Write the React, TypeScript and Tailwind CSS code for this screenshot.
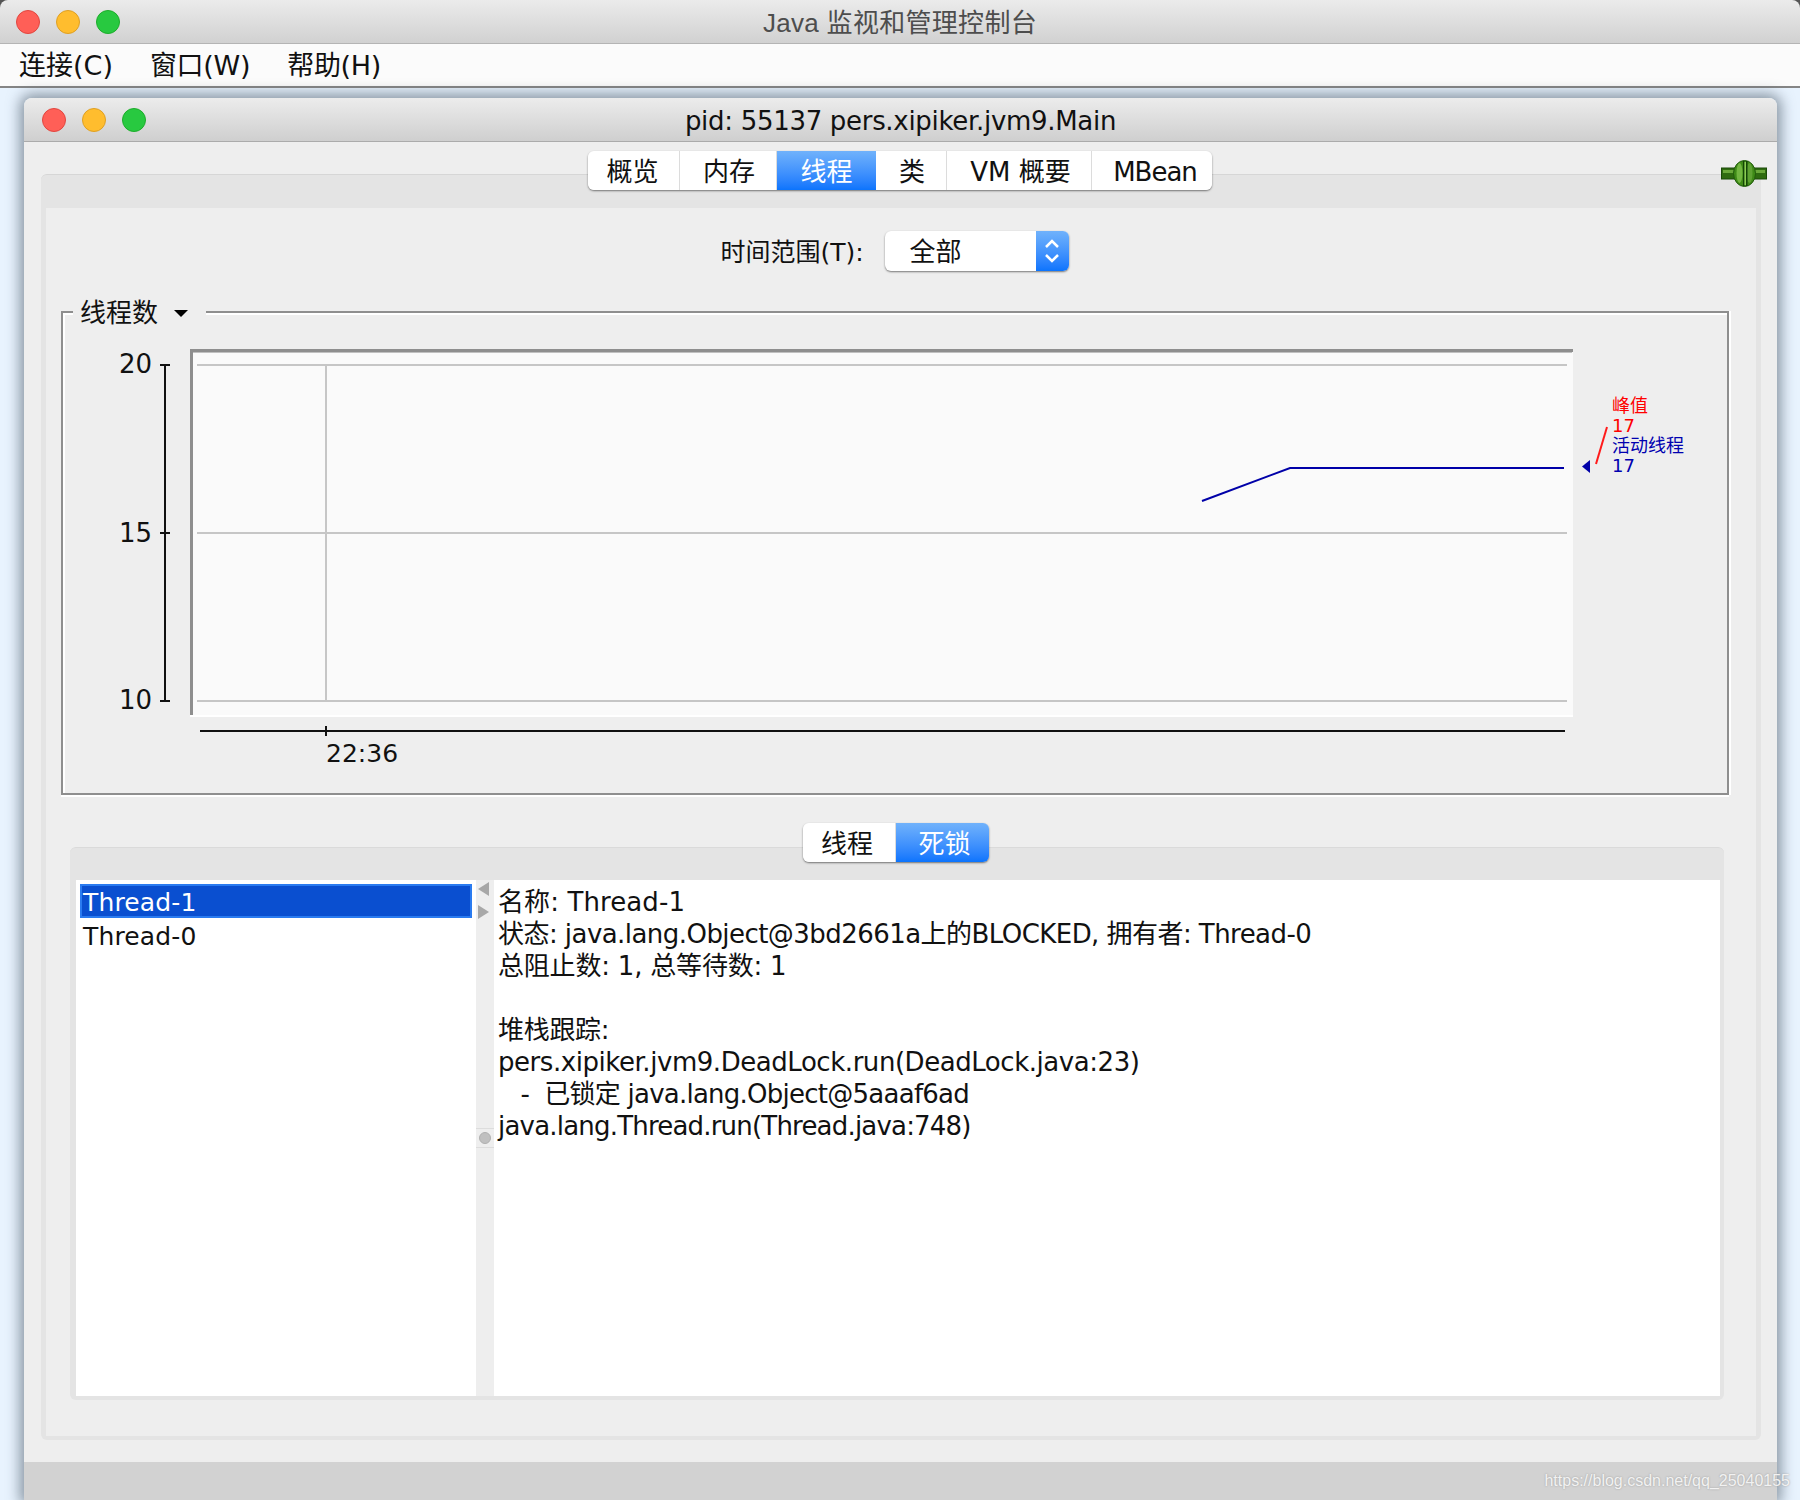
import React from 'react';

const uiFont = "[font-family:'DejaVu_Sans','Noto_Sans_CJK_SC',sans-serif]";

function TrafficLights() {
  return (
    <div className="flex gap-4">
      <span className="w-6 h-6 rounded-full bg-[#ff5f57] border border-[#e2463f]" />
      <span className="w-6 h-6 rounded-full bg-[#ffbd2e] border border-[#dfa023]" />
      <span className="w-6 h-6 rounded-full bg-[#28c940] border border-[#1dad2b]" />
    </div>
  );
}

type TabProps = { label: string; width: string; active?: boolean };

function Tab({ label, width, active }: TabProps) {
  return (
    <div
      className={
        active
          ? `${width} h-full pt-[3px] flex items-center justify-center text-white bg-gradient-to-b from-[#70b2fb] to-[#0a74fd]`
          : `${width} h-full pt-[3px] flex items-center justify-center bg-white border-r border-[#dcdcdc] last:border-r-0`
      }
    >
      {label}
    </div>
  );
}

function PlugIcon() {
  return (
    <svg width="46" height="27" viewBox="0 0 46 27">
      <rect x="0.500" y="8" width="45" height="11" fill="#2f6b10" stroke="#1a4a08" />
      <rect x="2" y="10" width="42" height="3" fill="#6aa83a" />
      <ellipse cx="23.500" cy="13.500" rx="11" ry="13" fill="#3f8a17" stroke="#1f5a0a" />
      <ellipse cx="18.500" cy="13" rx="3" ry="10" fill="#72b640" />
      <ellipse cx="28.500" cy="13" rx="3" ry="10" fill="#5ea232" />
      <rect x="22" y="1" width="1.500" height="25" fill="#134506" />
      <rect x="25" y="1" width="1.500" height="25" fill="#134506" />
      <rect x="23.500" y="2" width="1.500" height="23" fill="#8ccb55" />
    </svg>
  );
}

function ThreadChart() {
  return (
    <svg className="block" width="1664" height="480" viewBox="63 312 1664 480">
      {/* plot area */}
      <rect x="190" y="348" width="1383" height="367" fill="#fafafa" />
      <path d="M1573 715H191V349H1573" fill="none" stroke="#ffffff" strokeWidth="2" />
      <path d="M191.500 714V349.500H1573" fill="none" stroke="#8e8e8e" strokeWidth="3" />
      <line x1="193" y1="351.500" x2="1572" y2="351.500" stroke="#c0c0c0" strokeWidth="1" />
      <g stroke="#c6c6c6" strokeWidth="2">
        <line x1="197" y1="364" x2="1567" y2="364" />
        <line x1="197" y1="532" x2="1567" y2="532" />
        <line x1="197" y1="700" x2="1567" y2="700" />
        <line x1="326" y1="364" x2="326" y2="700" />
      </g>
      <polyline points="1202,500 1290,467 1564,467" fill="none" stroke="#0000a8" strokeWidth="2" />

      {/* axes */}
      <g stroke="#111111" strokeWidth="2">
        <line x1="165" y1="364" x2="165" y2="700" />
        <line x1="160" y1="364" x2="170" y2="364" />
        <line x1="160" y1="532" x2="170" y2="532" />
        <line x1="160" y1="700" x2="170" y2="700" />
        <line x1="200" y1="730" x2="1565" y2="730" />
        <line x1="326" y1="725" x2="326" y2="735" />
      </g>
      <g fill="#111111" fontSize="26" fontFamily="'DejaVu Sans', sans-serif">
        <text x="152" y="372" textAnchor="end">20</text>
        <text x="152" y="541" textAnchor="end">15</text>
        <text x="152" y="708" textAnchor="end">10</text>
        <text x="326" y="761" fontSize="25">22:36</text>
      </g>

      {/* peak / live legend */}
      <polygon points="1590,459 1590,472 1582,465.500" fill="#0000a8" />
      <line x1="1607" y1="426" x2="1596" y2="463" stroke="#ff1a1a" strokeWidth="2" />
      <g fontSize="18" fontFamily="'DejaVu Sans', 'Noto Sans CJK SC', sans-serif">
        <text x="1612" y="411" fill="#ff0000">峰值</text>
        <text x="1612" y="431" fill="#ff0000">17</text>
        <text x="1612" y="451" fill="#0000b0">活动线程</text>
        <text x="1612" y="471" fill="#0000b0">17</text>
      </g>
    </svg>
  );
}

const detailLines = [
  { text: '名称: Thread-1', track: 'tracking-[0.1px]' },
  { text: '状态: java.lang.Object@3bd2661a上的BLOCKED, 拥有者: Thread-0', track: 'tracking-[-0.55px]' },
  { text: '总阻止数: 1, 总等待数: 1', track: 'tracking-[-0.2px]' },
  { text: '\u00a0', track: '' },
  { text: '堆栈跟踪:', track: 'tracking-[-0.3px]' },
  { text: 'pers.xipiker.jvm9.DeadLock.run(DeadLock.java:23)', track: 'tracking-[-0.45px]' },
  { text: '\u00a0\u00a0\u00a0-  已锁定 java.lang.Object@5aaaf6ad', track: 'tracking-[-0.75px]' },
  { text: 'java.lang.Thread.run(Thread.java:748)', track: 'tracking-[-0.8px]' },
];

export default function App() {
  return (
    <div className={`${uiFont} relative w-[1800px] h-[1500px] overflow-hidden flex flex-col bg-[#e8f3fe] text-[#111111]`}>
      {/* app title bar */}
      <div className="shrink-0 bg-[#555555]">
        <div className="relative h-[44px] flex items-center pl-4 rounded-t-lg bg-gradient-to-b from-[#ebebeb] to-[#d1d1d1] border-b border-[#b4b4b4]">
          <TrafficLights />
          <div className="absolute inset-0 pt-1 flex items-center justify-center text-[26px] tracking-[0.3px] text-[#4d4d4d] [font-family:'Liberation_Sans','Noto_Sans_CJK_SC',sans-serif]">
            Java 监视和管理控制台
          </div>
        </div>
      </div>

      {/* menu bar */}
      <div className="h-[44px] shrink-0 pt-[3px] flex items-center pl-[19px] gap-[37px] text-[27px] bg-[#fbfbfb] border-b-2 border-[#858585]">
        <span>连接(C)</span>
        <span className="tracking-[-0.3px]">窗口(W)</span>
        <span className="tracking-[-0.3px]">帮助(H)</span>
      </div>

      {/* desktop */}
      <div className="flex-1 min-h-0 flex px-6 pt-[10px]">
        {/* internal frame */}
        <div className="flex-1 flex flex-col rounded-t-lg shadow-[0_0_14px_4px_rgba(70,85,100,0.6)]">
          <div className="relative h-[44px] shrink-0 flex items-center pl-[18px] rounded-t-lg bg-gradient-to-b from-[#ececec] to-[#cfcfcf] border-b border-[#ababab]">
            <TrafficLights />
            <div className="absolute inset-0 pt-1 flex items-center justify-center text-[26px] tracking-[-0.3px]">
              pid: 55137 pers.xipiker.jvm9.Main
            </div>
          </div>

          <div className="flex-1 min-h-0 flex flex-col bg-[#eeeeee] pt-8 pl-[17px] pr-4 pb-[22px]">
            {/* main tab pane */}
            <div className="relative flex-1 min-h-0 flex flex-col rounded-md bg-[#e4e4e4] border-t border-[#d6d6d6] pt-[33px] px-[5px] pb-1">
              <div className="absolute right-[-6px] top-[-15px]">
                <PlugIcon />
              </div>
              <div className="absolute left-0 right-[2px] top-[-24px] flex justify-center">
                <div className="h-[39px] flex overflow-hidden rounded-md text-[26px] shadow-[0_1px_2px_rgba(0,0,0,0.5)]">
                  <Tab label="概览" width="w-[92px] pr-[2px]" />
                  <Tab label="内存" width="w-[97px] pl-[2px]" />
                  <Tab label="线程" width="w-[99px]" active />
                  <Tab label="类" width="w-[71px] pl-[2px]" />
                  <Tab label="VM 概要" width="w-[145px] pl-[3px]" />
                  <Tab label="MBean" width="w-[120px] pl-[6px] tracking-[-1px]" />
                </div>
              </div>

              <div className="flex-1 min-h-0 flex flex-col bg-[#eeeeee] pt-[23px] pl-[15px] pr-[27px] pb-9">
                {/* time range row */}
                <div className="h-[40px] shrink-0 pr-[3px] flex items-center justify-center gap-[21px] text-[25px]">
                  <span className="pl-[2px] pt-[3px]">时间范围(T):</span>
                  <div className="w-[184px] h-full flex overflow-hidden rounded-md bg-white shadow-[0_1px_2px_rgba(0,0,0,0.5)]">
                    <span className="flex-1 pl-[25px] pt-[2px] flex items-center text-[26px]">全部</span>
                    <span className="w-[33px] flex items-center justify-center bg-gradient-to-b from-[#70b2fb] to-[#0a74fd]">
                      <svg width="18" height="28" viewBox="0 0 18 28" fill="none" stroke="white" strokeWidth="2.500">
                        <path d="M3 10L9 4L15 10" />
                        <path d="M3 18L9 24L15 18" />
                      </svg>
                    </span>
                  </div>
                </div>

                {/* chart frame */}
                <div className="relative mt-[40px] h-[484px] shrink-0 border-2 border-[#8e8e8e] shadow-[0_2px_0_#ffffff,2px_0_0_#ffffff,inset_2px_2px_0_#ffffff]">
                  <div className="absolute left-[10px] top-[-15px] w-[133px] h-7 pt-[3px] flex items-center gap-[16px] pl-[7px] bg-[#eeeeee] text-[26px]">
                    <span>线程数</span>
                    <span className="w-0 h-0 border-x-[7px] border-x-transparent border-t-[7px] border-t-black" />
                  </div>
                  <ThreadChart />
                </div>

                {/* lower tab pane */}
                <div className="relative ml-[9px] mr-[5px] mt-[52px] flex-1 min-h-0 flex flex-col rounded-md bg-[#e4e4e4] border-t border-[#dadada] pt-[32px] pl-[6px] pr-1 pb-1">
                  <div className="absolute left-0 right-[2px] top-[-25px] flex justify-center">
                    <div className="h-[39px] flex overflow-hidden rounded-md text-[26px] shadow-[0_1px_2px_rgba(0,0,0,0.5)]">
                      <Tab label="线程" width="w-[93px] pr-[4px]" />
                      <Tab label="死锁" width="w-[93px] pl-[4px]" active />
                    </div>
                  </div>

                  <div className="flex-1 min-h-0 flex bg-white">
                    {/* thread list */}
                    <div className="w-[400px] shrink-0 pt-1 px-1 text-[25px] tracking-[0.15px]">
                      <div className="h-[34px] pt-[3px] flex items-center pl-[1px] text-white bg-[#0a4fd0] border-2 border-[#2a7bf0]">Thread-1</div>
                      <div className="h-[34px] pt-[3px] flex items-center pl-[3px]">Thread-0</div>
                    </div>

                    {/* split bar */}
                    <div className="relative w-[18px] shrink-0 bg-[#eeeeee]">
                      <span className="absolute left-[2px] top-[2px] w-0 h-0 border-y-[7px] border-y-transparent border-r-[11px] border-r-[#a8a8a8]" />
                      <span className="absolute left-[2px] top-[25px] w-0 h-0 border-y-[7px] border-y-transparent border-l-[11px] border-l-[#a8a8a8]" />
                      <div className="absolute left-0 right-0 top-[248px] h-[20px] border-y border-[#dddddd] flex items-center justify-center">
                        <span className="w-3 h-3 rounded-full bg-[#c0c0c0] border border-[#b0b0b0]" />
                      </div>
                    </div>

                    {/* detail text */}
                    <div className="flex-1 pl-1 pt-[6px] text-[26px] leading-[32px] whitespace-pre">
                      {detailLines.map((line, i) => (
                        <div key={i} className={line.track}>{line.text}</div>
                      ))}
                    </div>
                  </div>
                </div>
              </div>
            </div>
          </div>

          <div className="h-[38px] shrink-0 bg-[#d2d2d2]" />
        </div>
      </div>

      {/* watermark */}
      <div className="absolute right-[10px] bottom-[9px] text-[16px] leading-5 text-[#f2f2f2] [text-shadow:0_0_2px_#999999] [font-family:'Liberation_Sans',sans-serif]">
        https://blog.csdn.net/qq_25040155
      </div>
    </div>
  );
}
